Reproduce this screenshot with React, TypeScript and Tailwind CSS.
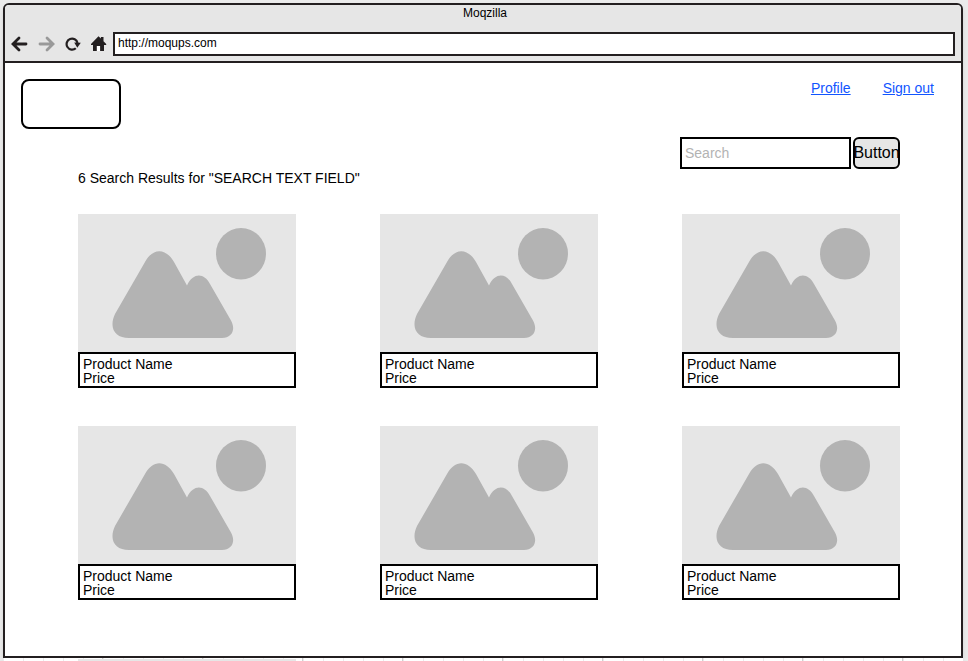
import React from "react";

const products = Array.from({ length: 6 }, (_, i) => ({
  id: i + 1,
  name: "Product Name",
  price: "Price",
}));

function BackIcon() {
  return (
    <svg width="17" height="16" viewBox="0 0 17 16" aria-hidden="true">
      <path d="M8 2 2 8l6 6M2.200 8h12.800" fill="none" stroke="currentColor" strokeWidth="2.800" strokeLinecap="round" />
    </svg>
  );
}

function ForwardIcon() {
  return (
    <svg width="17" height="16" viewBox="0 0 17 16" aria-hidden="true">
      <path d="M9 2l6 6-6 6M14.800 8H2" fill="none" stroke="currentColor" strokeWidth="2.800" strokeLinecap="round" />
    </svg>
  );
}

function ReloadIcon() {
  return (
    <svg width="16" height="16" viewBox="0 0 16 16" aria-hidden="true">
      <path d="M10.800 12.200A5.500 5.500 0 1 1 12.500 7" fill="none" stroke="currentColor" strokeWidth="2.200" />
      <path d="M9.200 6.600l6.600.2-3.500 5z" fill="currentColor" />
    </svg>
  );
}

function HomeIcon() {
  return (
    <svg width="16" height="16" viewBox="0 0 16 16" aria-hidden="true">
      <path d="M7.500 .2 9.900 2.600V1h2.600v4.200l2.700 2.900V9H13v6H2V9H-.2V8.100z" fill="currentColor" />
      <path d="M5.800 10h3.300v5H5.800z" fill="#fff" />
    </svg>
  );
}

function Placeholder() {
  return (
    <svg className="block w-full bg-[#e6e6e6]" viewBox="0 0 218 138" role="img" aria-label="Product">
      <ellipse cx="163" cy="39.700" rx="25" ry="25.700" fill="#b3b3b3" />
      <path
        d="M67 48C75 33.500 87.500 33.500 96 48L109 71.500C115 58.500 126 58.500 132 70L153 106.500C158 115.500 154 124 144 124H51C37 124 30.500 114 37 100Z"
        fill="#b3b3b3"
      />
    </svg>
  );
}

export default function App() {
  return (
    <div className="flex min-h-screen flex-col bg-[#ebebeb] pl-[3px] pr-[5px] pt-[3px] font-['Liberation_Sans',Arial,sans-serif] text-black">
      <div className="flex flex-1 flex-col rounded-t-md border-2 border-[#231f20] bg-white shadow-md">
        <header className="rounded-t border-b-2 border-[#231f20] bg-[#e6e6e6] pb-[5px] text-[12px]">
          <h1 className="h-[27px] pl-1 text-center leading-4">Moqzilla</h1>
          <div className="flex items-center px-1.5 text-[#231f20]">
            <nav aria-label="Browser" className="flex w-[102px] gap-2.5">
              <button type="button" aria-label="Back"><BackIcon /></button>
              <button type="button" aria-label="Forward" className="text-[#999999]"><ForwardIcon /></button>
              <button type="button" aria-label="Reload"><ReloadIcon /></button>
              <button type="button" aria-label="Home"><HomeIcon /></button>
            </nav>
            <input
              aria-label="Address"
              type="text"
              defaultValue="http://moqups.com"
              className="h-6 min-w-0 flex-1 border-2 border-[#231f20] bg-white px-[3px] pb-0.5 text-black outline-none"
            />
          </div>
        </header>

        <div className="flex items-start justify-between pl-4 pr-[27px] pt-4">
          <div className="h-[50px] w-[100px] rounded-lg border-2 border-black" />
          <nav aria-label="Account" className="flex gap-8 text-[14px] leading-[18px] text-[#1155ff]">
            <a href="#profile" className="underline">Profile</a>
            <a href="#sign-out" className="underline">Sign out</a>
          </nav>
        </div>

        <main className="pb-14 pl-[73px] pr-[61px] pt-2">
          <form className="flex justify-end gap-0.5" onSubmit={(e) => e.preventDefault()}>
            <input
              aria-label="Search"
              type="search"
              placeholder="Search"
              className="h-8 w-[171px] border-2 border-black px-[3px] text-[14px] outline-none placeholder:text-[#b3b3b3]"
            />
            <button
              type="submit"
              className="flex h-8 w-[47px] items-center justify-center rounded-md border-2 border-black bg-[#e6e6e6] text-[16px]"
            >
              Button
            </button>
          </form>
          <h2 className="text-[14px] leading-[18px]">6 Search Results for "SEARCH TEXT FIELD"</h2>
          <ul className="mt-[27px] grid grid-cols-3 gap-x-[84px] gap-y-[38px]">
            {products.map((p) => (
              <li key={p.id}>
                <Placeholder />
                <div className="border-2 border-black px-[3px] pb-px pt-[3px] text-[14px] leading-[14px]">
                  <p>{p.name}</p>
                  <p>{p.price}</p>
                </div>
              </li>
            ))}
          </ul>
        </main>
      </div>

      <div className="h-1 bg-white bg-[linear-gradient(to_right,#d0d0d0_1px,transparent_1px),linear-gradient(to_right,#ebebeb_1px,transparent_1px)] bg-[length:100px_100%,20px_100%] bg-[position:99px_0,0_0] pl-[75px] pr-[63px] pt-px">
        <div className="grid h-full grid-cols-3 gap-x-[84px]">
          <div className="bg-[#e6e6e6]" />
        </div>
      </div>
    </div>
  );
}
